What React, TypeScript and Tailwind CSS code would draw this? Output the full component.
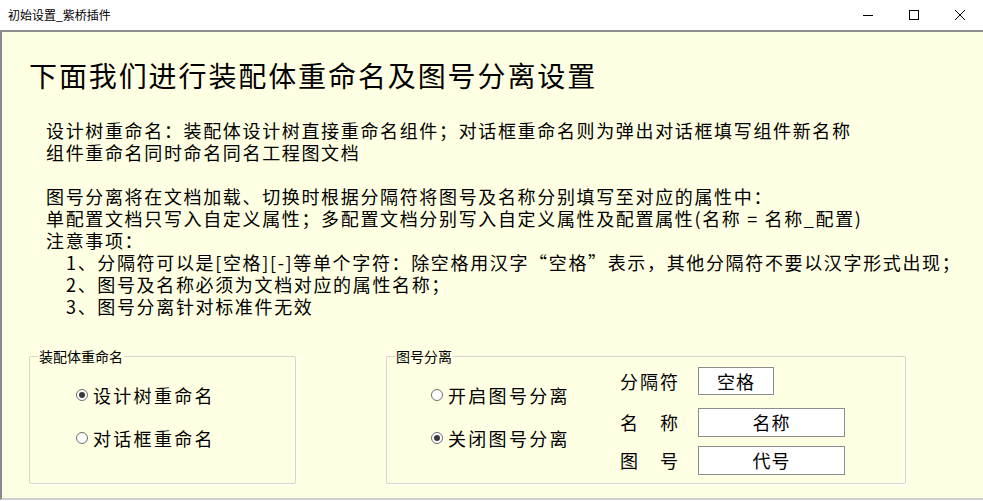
import React from "react";

function Radio({ checked, label }: { checked?: boolean; label: string }) {
  return (
    <div className="flex items-center h-[22px]">
      <span className="w-[12px] h-[12px] rounded-full border border-[#6f6f6f] bg-white flex items-center justify-center shrink-0">
        {checked && <span className="w-[6px] h-[6px] rounded-full bg-[#3a3a3a]" />}
      </span>
      <span className="ml-[5px] text-[18px] leading-[22px] tracking-[2.3px] text-black whitespace-nowrap">{label}</span>
    </div>
  );
}

function Group({ title, className, children }: { title: string; className: string; children: React.ReactNode }) {
  return (
    <div className={"relative border border-[#d6d6cc] rounded-[2px] shadow-[1px_1px_0_#ffffff] " + className}>
      <span className="absolute -top-[10px] left-[8px] px-[1px] bg-[#ffffe3] text-[14px] leading-[18px] text-black">{title}</span>
      {children}
    </div>
  );
}

function Field({ value, w }: { value: string; w: string }) {
  return (
    <div className={"h-full bg-white border border-[#8c8c8c] flex items-center justify-center text-[18px] tracking-[1px] text-black " + w}>
      {value}
    </div>
  );
}

export default function App() {
  return (
    <div className="w-[983px] h-[501px] flex flex-col bg-white font-['Noto_Sans_CJK_SC',sans-serif] overflow-hidden">
      <div className="h-[30px] flex items-center justify-between bg-white">
        <span className="ml-[8px] text-[12px] text-black">初始设置_紫桥插件</span>
        <div className="flex h-full">
          <div className="w-[46px] h-full flex items-center justify-center">
            <svg width="12" height="12" viewBox="0 0 12 12"><line x1="1" y1="6.5" x2="11" y2="6.5" stroke="#000" strokeWidth="1" /></svg>
          </div>
          <div className="w-[46px] h-full flex items-center justify-center">
            <svg width="12" height="12" viewBox="0 0 12 12"><rect x="1.5" y="1.5" width="9" height="9" fill="none" stroke="#000" strokeWidth="1" /></svg>
          </div>
          <div className="w-[46px] h-full flex items-center justify-center">
            <svg width="12" height="12" viewBox="0 0 12 12"><path d="M1 1 L11 11 M11 1 L1 11" stroke="#000" strokeWidth="1" /></svg>
          </div>
        </div>
      </div>
      <div className="h-[470px] bg-[#ffffe3] border-t-2 border-l-2 border-b-2 border-t-[#8f8f8f] border-l-[#8a8a8a] border-b-[#cfcfcf] pl-[27px] text-black">
        <h1 className="mt-[26px] text-[28px] leading-[34px] tracking-[1.9px] font-normal">下面我们进行装配体重命名及图号分离设置</h1>
        <div className="mt-[27px] ml-[17px] text-[18px] leading-[22px] tracking-[1.65px] whitespace-nowrap">
          <p>设计树重命名：装配体设计树直接重命名组件；对话框重命名则为弹出对话框填写组件新名称</p>
          <p>组件重命名同时命名同名工程图文档</p>
          <p className="h-[22px]"></p>
          <p>图号分离将在文档加载、切换时根据分隔符将图号及名称分别填写至对应的属性中：</p>
          <p>单配置文档只写入自定义属性；多配置文档分别写入自定义属性及配置属性(名称 = 名称_配置)</p>
          <p>注意事项：</p>
          <p className="pl-[20px]">1、分隔符可以是[空格][-]等单个字符：除空格用汉字“空格”表示，其他分隔符不要以汉字形式出现；</p>
          <p className="pl-[20px]">2、图号及名称必须为文档对应的属性名称；</p>
          <p className="pl-[20px]">3、图号分离针对标准件无效</p>
        </div>
        <div className="mt-[39px] flex gap-[90px]">
          <Group title="装配体重命名" className="w-[267px] h-[128px]">
            <div className="pt-[27px] pl-[46px] flex flex-col gap-[21px]">
              <Radio checked label="设计树重命名" />
              <Radio label="对话框重命名" />
            </div>
          </Group>
          <Group title="图号分离" className="w-[520px] h-[128px] flex">
            <div className="w-[233px] pt-[27px] pl-[44px] flex flex-col gap-[21px]">
              <Radio label="开启图号分离" />
              <Radio checked label="关闭图号分离" />
            </div>
            <div className="pt-[10px] flex flex-col">
              <div className="flex h-[28px] items-center">
                <span className="w-[78px] text-[18px] tracking-[2px]">分隔符</span>
                <Field value="空格" w="w-[76px]" />
              </div>
              <div className="flex h-[29px] items-center mt-[13px]">
                <span className="w-[78px] text-[18px] tracking-[2px]">名　称</span>
                <Field value="名称" w="w-[147px]" />
              </div>
              <div className="flex h-[29px] items-center mt-[9px]">
                <span className="w-[78px] text-[18px] tracking-[2px]">图　号</span>
                <Field value="代号" w="w-[147px]" />
              </div>
            </div>
          </Group>
        </div>
      </div>
    </div>
  );
}
